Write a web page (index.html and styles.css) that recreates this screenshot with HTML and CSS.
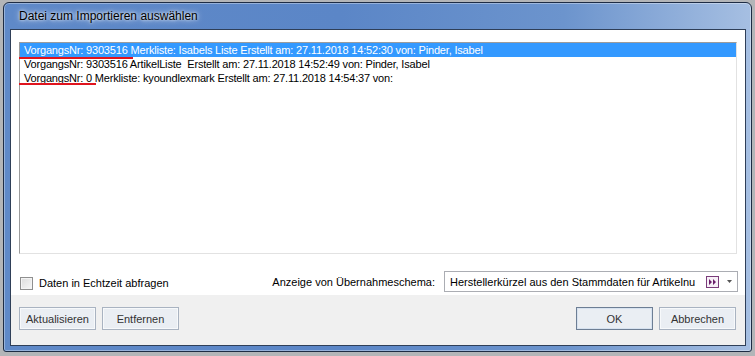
FILE: index.html
```html
<!DOCTYPE html>
<html lang="de">
<head>
<meta charset="utf-8">
<title>Datei zum Importieren auswählen</title>
<link rel="stylesheet" href="styles.css">
</head>
<body>
<div class="window">
  <div class="titlebar">Datei zum Importieren auswählen</div>
  <div class="client">
    <div class="main">
      <div class="list">
        <div class="row sel">VorgangsNr: 9303516 Merkliste: Isabels Liste Erstellt am: 27.11.2018 14:52:30 von: Pinder, Isabel</div>
        <div class="row">VorgangsNr: 9303516 ArtikelListe&nbsp; Erstellt am: 27.11.2018 14:52:49 von: Pinder, Isabel</div>
        <div class="row">VorgangsNr: 0 Merkliste: kyoundlexmark Erstellt am: 27.11.2018 14:54:37 von:</div>
        <span class="mark mark-one"></span>
        <span class="mark mark-two"></span>
      </div>
      <div class="options">
        <label class="check"><span class="box"></span>Daten in Echtzeit abfragen</label>
        <div class="schema">
          <span class="schema-label">Anzeige von Übernahmeschema:</span>
          <div class="combo">
            <span class="combo-text">Herstellerkürzel aus den Stammdaten für Artikelnu</span>
            <span class="combo-icon"><svg width="9" height="6" viewBox="0 0 9 6"><path d="M1 0 L4 3 L1 6 Z M5 0 L8 3 L5 6 Z" fill="#6a1f6a"/></svg></span>
            <span class="combo-arrow"><svg width="5" height="3" viewBox="0 0 5 3"><path d="M0 0 H5 L2.5 3 Z" fill="#555"/></svg></span>
          </div>
        </div>
      </div>
    </div>
    <div class="footer">
      <div class="group">
        <button class="btn">Aktualisieren</button>
        <button class="btn">Entfernen</button>
      </div>
      <div class="group">
        <button class="btn default">OK</button>
        <button class="btn">Abbrechen</button>
      </div>
    </div>
  </div>
</div>
</body>
</html>
```
FILE: styles.css
```css
html, body {
  margin: 0;
  padding: 0;
}
body {
  width: 755px;
  height: 356px;
  overflow: hidden;
  background: #b3b5b8;
  font-family: "Liberation Sans", Arial, sans-serif;
  font-size: 11px;
  color: #000;
}
.window {
  box-sizing: border-box;
  margin: 2px 0 0 3px;
  width: 749px;
  height: 350px;
  border: 1px solid #1e2c44;
  border-radius: 6px 6px 3px 3px;
  padding: 0 5px 5px 6px;
  display: flex;
  flex-direction: column;
  background: linear-gradient(to right, #5f89c8 0%, #5b86c7 45%, #6c94cd 75%, #a6bfe2 100%);
  box-shadow: inset 0 0 0 1px rgba(255,255,255,0.35);
}
.titlebar {
  height: 26px;
  line-height: 27px;
  padding-left: 9px;
  font-size: 12px;
  color: #000;
  text-shadow: 0 0 6px rgba(255,255,255,0.9), 0 0 3px rgba(255,255,255,0.9);
  flex: none;
}
.client {
  flex: 1;
  border: 1px solid #2f3f58;
  background: #f0f0f0;
  display: flex;
  flex-direction: column;
}
.main {
  height: 265px;
  background: #fff;
  padding: 12px 8px 0 8px;
  box-sizing: border-box;
  flex: none;
}
.list {
  position: relative;
  box-sizing: border-box;
  height: 212px;
  border: 1px solid;
  border-color: #9c9c9c #e2e2e2 #e2e2e2 #9c9c9c;
  background: #fff;
}
.row {
  height: 14px;
  line-height: 14px;
  padding-left: 4px;
  white-space: nowrap;
  letter-spacing: -0.18px;
}
.row.sel {
  background: #3399ff;
  color: #fff;
}
.mark {
  position: absolute;
  left: -1px;
  height: 2px;
  background: #e0141e;
}
.mark-one {
  top: 14px;
  width: 114px;
}
.mark-two {
  top: 40px;
  width: 77px;
}
.options {
  margin-top: 17px;
  height: 21px;
  display: flex;
  align-items: center;
  justify-content: space-between;
}
.check {
  display: flex;
  align-items: center;
  gap: 6px;
  margin-left: 1px;
  margin-top: 3px;
}
.box {
  width: 11px;
  height: 11px;
  border: 1px solid #8f8f8f;
  background: linear-gradient(135deg, #dcdcdc, #f7f7f7);
  box-shadow: inset 0 0 0 1px #f4f4f4;
}
.schema {
  display: flex;
  align-items: center;
  gap: 9px;
  margin-right: -1px;
}
.combo {
  box-sizing: border-box;
  width: 294px;
  height: 21px;
  border: 1px solid #abadb3;
  display: flex;
  align-items: center;
  padding-left: 5px;
  background: #fff;
}
.combo-text {
  flex: 1;
  white-space: nowrap;
  overflow: hidden;
}
.combo-icon {
  box-sizing: border-box;
  width: 13px;
  height: 12px;
  border: 1px solid #7a3c7a;
  background: #f7f0f7;
  display: flex;
  align-items: center;
  justify-content: center;
  margin-right: 8px;
  margin-top: 1px;
}
.combo-arrow {
  display: flex;
  align-items: center;
  margin-right: 5px;
}
.footer {
  flex: 1;
  display: flex;
  justify-content: space-between;
  align-items: flex-start;
  padding: 12px 9px 0 8px;
}
.group {
  display: flex;
  gap: 6px;
}
.btn {
  box-sizing: border-box;
  width: 77px;
  height: 23px;
  padding: 0;
  font-family: "Liberation Sans", Arial, sans-serif;
  font-size: 11px;
  color: #333;
  background: #eaeef3;
  border: 1px solid #a9b3c1;
  box-shadow: inset 0 0 0 1px #f7f9fb;
  border-radius: 0;
}
.btn.default {
  border-color: #6d7e94;
  box-shadow: inset 0 0 0 1px #d7e2ef;
}
```
